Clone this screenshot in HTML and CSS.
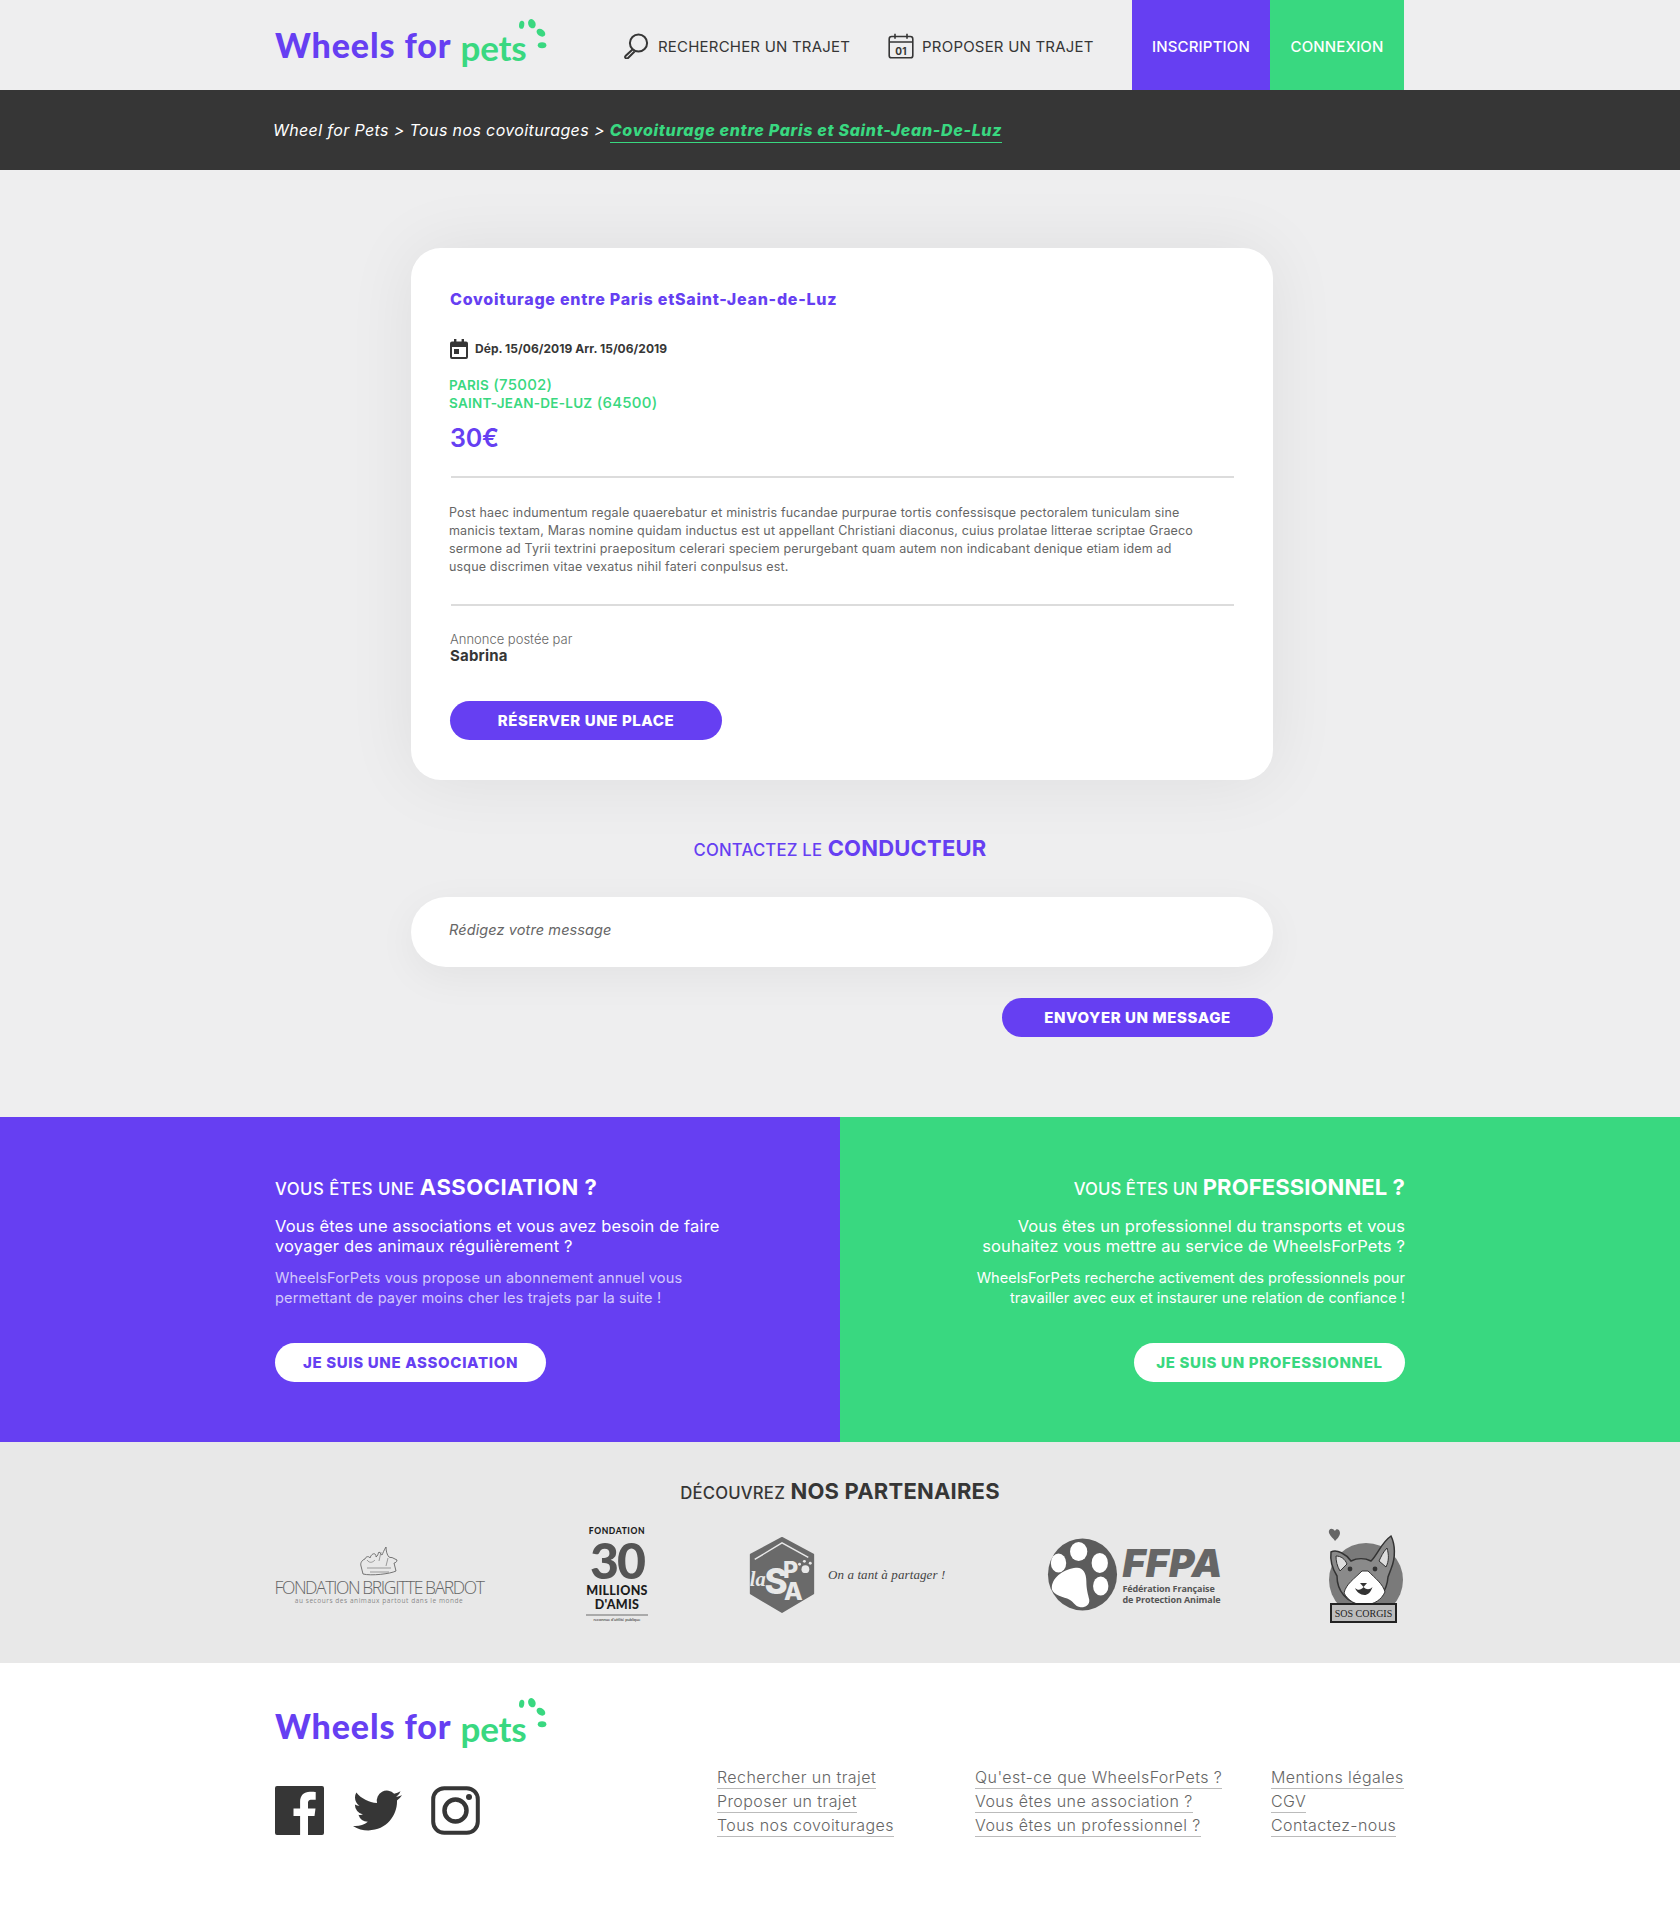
FILE: index.html
```html
<!DOCTYPE html>
<html lang="fr">
<head>
<meta charset="utf-8">
<title>Wheels for Pets</title>
<link rel="stylesheet" href="styles.css">
</head>
<body>
<header class="topbar">
  <div class="wrap topbar-in">
    <a class="logo">
      <span class="logo-a">Wheels for</span><span class="logo-b">pets</span>
      <svg class="paws" viewBox="0 0 30 30"><ellipse cx="5" cy="6" rx="2.3" ry="3.6" transform="rotate(8 5 6)"/><ellipse cx="14" cy="5" rx="3.2" ry="4.2" transform="rotate(-20 14 5)"/><ellipse cx="22" cy="13" rx="3" ry="4.2" transform="rotate(-55 22 13)"/><ellipse cx="23" cy="24" rx="3.8" ry="2.6"/></svg>
    </a>
    <nav class="nav">
      <a class="nav-link nav-search">
        <svg class="nav-ic" viewBox="0 0 26 26"><circle cx="15.5" cy="10" r="8.6" fill="none" stroke="#363636" stroke-width="2"/><path d="M9.5 16.5 2.5 23a1.6 1.6 0 0 0 2.3 2.2l6.8-6.7" fill="none" stroke="#363636" stroke-width="2"/></svg>
        RECHERCHER UN TRAJET
      </a>
      <a class="nav-link nav-post">
        <svg class="nav-ic" viewBox="0 0 26 26"><rect x="1.2" y="3.5" width="23.6" height="21.3" rx="2.4" fill="none" stroke="#363636" stroke-width="1.6"/><path d="M1.2 9h23.6M7 .8v5M19 .8v5" fill="none" stroke="#363636" stroke-width="1.6"/><text x="13" y="21.5" class="cal-num">01</text></svg>
        PROPOSER UN TRAJET
      </a>
    </nav>
    <a class="cta cta-purple">INSCRIPTION</a>
    <a class="cta cta-green">CONNEXION</a>
  </div>
</header>

<div class="crumbs">
  <div class="wrap crumbs-in">Wheel for Pets &gt; Tous nos covoiturages &gt; <strong class="crumb-on">Covoiturage entre Paris et Saint-Jean-De-Luz</strong></div>
</div>

<main class="main">
  <article class="card">
    <h1 class="card-title">Covoiturage entre Paris etSaint-Jean-de-Luz</h1>
    <p class="dates">
      <svg class="date-ic" viewBox="0 0 18 20"><path d="M2 2.5h2V0h2.4v2.5h5.2V0H14v2.5h2a2 2 0 0 1 2 2V18a2 2 0 0 1-2 2H2a2 2 0 0 1-2-2V4.500a2 2 0 0 1 2-2Zm0 5.500V18h14V8Z" fill="#363636"/><rect x="4" y="10" width="5" height="5" fill="#363636"/></svg>
      Dép. 15/06/2019 Arr. 15/06/2019
    </p>
    <p class="city"><span class="up">Paris</span> (75002)<br><span class="up">Saint-Jean-de-Luz</span> (64500)</p>
    <p class="price">30€</p>
    <hr class="rule">
    <p class="desc">Post haec indumentum regale quaerebatur et ministris fucandae purpurae tortis confessisque pectoralem tuniculam sine manicis textam, Maras nomine quidam inductus est ut appellant Christiani diaconus, cuius prolatae litterae scriptae Graeco sermone ad Tyrii textrini praepositum celerari speciem perurgebant quam autem non indicabant denique etiam idem ad usque discrimen vitae vexatus nihil fateri conpulsus est.</p>
    <hr class="rule rule-2">
    <p class="by">Annonce postée par</p>
    <p class="name">Sabrina</p>
    <a class="pill pill-reserve">RÉSERVER UNE PLACE</a>
  </article>

  <h2 class="contact-title"><span class="sm">Contactez le</span> <b>CONDUCTEUR</b></h2>
  <div class="msg">Rédigez votre message</div>
  <div class="send-row"><a class="pill pill-send">ENVOYER UN MESSAGE</a></div>
</main>

<section class="duo">
  <div class="half half-p">
    <div class="half-in">
      <h2 class="half-title"><span class="sm">Vous êtes une</span> <b>ASSOCIATION ?</b></h2>
      <p class="lead">Vous êtes une associations et vous avez besoin de faire voyager des animaux régulièrement ?</p>
      <p class="sub sub-dim">WheelsForPets vous propose un abonnement annuel vous permettant de payer moins cher les trajets par la suite !</p>
      <a class="pill-w pill-w-p">JE SUIS UNE ASSOCIATION</a>
    </div>
  </div>
  <div class="half half-g">
    <div class="half-in half-in-r">
      <h2 class="half-title"><span class="sm">Vous êtes un</span> <b>PROFESSIONNEL ?</b></h2>
      <p class="lead">Vous êtes un professionnel du transports et vous souhaitez vous mettre au service de WheelsForPets ?</p>
      <p class="sub">WheelsForPets recherche activement des professionnels pour travailler avec eux et instaurer une relation de confiance !</p>
      <a class="pill-w pill-w-g">JE SUIS UN PROFESSIONNEL</a>
    </div>
  </div>
</section>

<section class="partners">
  <h2 class="partners-title"><span class="sm">Découvrez</span> <b>NOS PARTENAIRES</b></h2>
  <div class="wrap logos">
    <div class="lg lg-bardot">
      <svg class="bb-ic" viewBox="0 0 42 34"><path d="M3 23c-1-3 1-6 4-7 1-3 4-3 5-1 1-3 3-5 5-4 1 1 1 2 1 3 2-1 2-4 3-5 2 1 2 3 3 3 1-2 2-5 4-8 0 4 1 8 3 10 1 1 3 0 4 1l4 2c0 2-2 3-3 3l2 8c-6 3-25 5-33 3l-2-8Z" fill="none" stroke="#666" stroke-width=".9"/><path d="M9 17c3 4 6 2 8 0M23 9l-2 9M30 15l-2 8M9 25h24M12 29h19" fill="none" stroke="#777" stroke-width=".7"/></svg>
      <div class="bb-name">FONDATION BRIGITTE BARDOT</div>
      <div class="bb-sub">au secours des animaux partout dans le monde</div>
    </div>
    <div class="lg lg-30">
      <div class="m30-top">FONDATION</div>
      <div class="m30-num">30</div>
      <div class="m30-mid">MILLIONS<br>D'AMIS</div>
      <div class="m30-foot">reconnue d'utilité publique</div>
    </div>
    <div class="lg lg-spa">
      <svg class="spa-ic" viewBox="0 0 68 78"><path d="M34 1 66 18V58L34 77 2 58V18Z" fill="#6a6a6a" stroke="#6a6a6a" stroke-width="2" stroke-linejoin="round"/><path d="M6 23 34 6l27 15" fill="none" stroke="#e8e8e8" stroke-width="1.500"/><text x="1" y="50" class="spa-la">la</text><text x="16" y="58" class="spa-s">S</text><text x="35" y="42" class="spa-p">P</text><text x="36" y="65" class="spa-a">A</text><circle cx="58" cy="33" r="4" fill="#e8e8e8"/><circle cx="52" cy="28" r="1.500" fill="#e8e8e8"/><circle cx="57" cy="25" r="1.500" fill="#e8e8e8"/><circle cx="63" cy="27" r="1.500" fill="#e8e8e8"/></svg>
      <span class="spa-tag">On a tant à partager !</span>
    </div>
    <div class="lg lg-ffpa">
      <svg class="ffpa-ic" viewBox="0 0 74 76"><ellipse cx="37" cy="38" rx="36" ry="37.500" fill="#5c5c5c"/><ellipse cx="33" cy="14" rx="9" ry="10" fill="#fff"/><ellipse cx="12" cy="26" rx="8" ry="10" fill="#fff"/><ellipse cx="55" cy="26" rx="8.500" ry="10.500" fill="#fff"/><ellipse cx="56" cy="50" rx="8" ry="10" fill="#fff"/><path d="M30 31c7-1 11 5 11 14 0 9 2 14 3 19 1 6-5 9-10 8-5-1-7-7-13-9C14 61 4 58 5 51 6 40 19 32 30 31Z" fill="#fff"/></svg>
      <div class="ffpa-t">
        <div class="ffpa-big">FFPA</div>
        <div class="ffpa-sm">Fédération Française<br>de Protection Animale</div>
      </div>
    </div>
    <div class="lg lg-corgi">
      <svg class="corgi" viewBox="0 0 80 100"><path d="M10 7c-3-4-7-2-6 2 1 3 5 6 6 8 2-2 5-5 5-8 0-4-4-5-5-2Z" fill="#666"/><circle cx="41" cy="56" r="37" fill="#7a7a7a"/><path d="M6 28c6-3 15 2 20 9 6-3 14-3 20 0 7-7 10-18 20-25 4 8 5 21 0 33l-3 8c-1 12-7 25-24 27C21 80 12 66 12 52 7 44 5 36 6 28Z" fill="#8a8a8a" stroke="#333" stroke-width="1.500"/><path d="M11 32c5 0 9 3 11 8l-7 7c-3-5-4-10-4-15ZM62 24c2 7 2 13-1 19l-7-6c2-4 4-9 8-13Z" fill="#ddd" stroke="#333"/><path d="M37 47c-8 8-16 13-18 22 4 8 12 12 21 12 10-1 16-5 20-13-2-8-10-14-17-21Z" fill="#fff" stroke="#333"/><circle cx="25" cy="45" r="2.400" fill="#333"/><circle cx="50" cy="45" r="2.400" fill="#333"/><path d="M35 59h7l-3.500 4ZM30 64c3 3 6 2 8.500-1 3 3 6 3 9 0-2 6-5 8-8 8-4 0-8-3-9.500-7Z" fill="#333"/><rect x="6" y="80" width="65" height="18" fill="#bdbdbd" stroke="#222" stroke-width="2"/><text x="38.500" y="93" class="corgi-t">SOS CORGIS</text></svg>
    </div>
  </div>
</section>

<footer class="footer">
  <div class="wrap footer-in">
    <div class="foot-left">
      <a class="logo logo-foot">
        <span class="logo-a">Wheels for</span><span class="logo-b">pets</span>
        <svg class="paws" viewBox="0 0 30 30"><ellipse cx="5" cy="6" rx="2.3" ry="3.6" transform="rotate(8 5 6)"/><ellipse cx="14" cy="5" rx="3.2" ry="4.2" transform="rotate(-20 14 5)"/><ellipse cx="22" cy="13" rx="3" ry="4.2" transform="rotate(-55 22 13)"/><ellipse cx="23" cy="24" rx="3.8" ry="2.6"/></svg>
      </a>
      <div class="social">
        <svg class="soc" viewBox="0 0 49 49"><path d="M2 0h45a2 2 0 0 1 2 2v45a2 2 0 0 1-2 2H33V30h6.500l1-7.500H33v-5c0-2.200.6-3.700 3.700-3.700h4V6.100c-.7-.1-3.100-.3-5.800-.3-5.800 0-9.800 3.500-9.800 10v6.700h-6.600V30h6.600v19H2a2 2 0 0 1-2-2V2a2 2 0 0 1 2-2Z" fill="#363636"/></svg>
        <svg class="soc" viewBox="0 0 24 24"><path d="M23.953 4.57a10 10 0 01-2.825.775 4.958 4.958 0 002.163-2.723c-.951.555-2.005.959-3.127 1.184a4.92 4.92 0 00-8.384 4.482C7.69 8.095 4.067 6.13 1.64 3.162a4.822 4.822 0 00-.666 2.475c0 1.71.87 3.213 2.188 4.096a4.904 4.904 0 01-2.228-.616v.06a4.923 4.923 0 003.946 4.827 4.996 4.996 0 01-2.212.085 4.936 4.936 0 004.604 3.417 9.867 9.867 0 01-6.102 2.105c-.39 0-.779-.023-1.17-.067a13.995 13.995 0 007.557 2.209c9.053 0 13.998-7.496 13.998-13.985 0-.21 0-.42-.015-.63A9.935 9.935 0 0024 4.59z" fill="#363636"/></svg>
        <svg class="soc" viewBox="0 0 49 49"><rect x="2.200" y="2.200" width="44.600" height="44.600" rx="11" fill="none" stroke="#363636" stroke-width="4"/><circle cx="24.500" cy="24.500" r="11" fill="none" stroke="#363636" stroke-width="4.500"/><circle cx="38" cy="11" r="3" fill="#363636"/></svg>
      </div>
    </div>
    <div class="foot-links">
      <ul class="col">
        <li><a>Rechercher un trajet</a></li>
        <li><a>Proposer un trajet</a></li>
        <li><a>Tous nos covoiturages</a></li>
      </ul>
      <ul class="col">
        <li><a>Qu'est-ce que WheelsForPets ?</a></li>
        <li><a>Vous êtes une association ?</a></li>
        <li><a>Vous êtes un professionnel ?</a></li>
      </ul>
      <ul class="col">
        <li><a>Mentions légales</a></li>
        <li><a>CGV</a></li>
        <li><a>Contactez-nous</a></li>
      </ul>
    </div>
  </div>
</footer>
</body>
</html>
```
FILE: styles.css
```css
* { box-sizing: border-box; }
html, body { margin: 0; padding: 0; }
body { font-family: Inter, "Open Sans", sans-serif; color: #363636; background: #eeeeef; width: 1680px; }
h1, h2, p, ul { margin: 0; padding: 0; }
ul { list-style: none; }
b, strong { font-weight: 700; }
.wrap { width: 1130px; margin: 0 auto; }
.sm { font-size: .76em; font-weight: 500; text-transform: uppercase; }

.topbar { height: 90px; background: #eeeeef; }
.topbar-in { display: flex; height: 90px; align-items: stretch; }
.logo { position: relative; display: flex; align-items: baseline; width: 272px; height: 60px; margin-top: 14px; padding-top: 12px; }
.logo-a { font: 900 34px/36px Lato, sans-serif; color: #663ff2; letter-spacing: .9px; white-space: nowrap; }
.logo-b { font: 700 35px/36px Lato, sans-serif; color: #39d880; margin-left: 9px; letter-spacing: -.2px; position: relative; top: 3px; }
.paws { position: absolute; left: 241px; top: 4px; width: 34px; height: 34px; fill: #39d880; }
.nav { display: flex; align-items: center; margin-left: 76px; gap: 38px; width: 509px; padding-top: 2px; }
.nav-link { display: flex; align-items: center; gap: 8px; font-size: 15px; color: #363636; white-space: nowrap; letter-spacing: .2px; }
.nav-search { gap: 9px; }
.nav-ic { width: 26px; height: 26px; flex: none; }
.cal-num { font: 700 10px Inter, sans-serif; text-anchor: middle; fill: #363636; }
.cta { display: flex; align-items: center; justify-content: center; color: #fff; font-size: 15px; font-weight: 500; padding-top: 2px; letter-spacing: .15px; }
.cta-purple { width: 138px; background: #663ff2; }
.cta-green { width: 134px; background: #39d880; }

.crumbs { height: 80px; background: #363636; }
.crumbs-in { padding: 29px 0 0; margin-left: 273px; width: 1130px; font-size: 16px; line-height: 22px; font-style: italic; color: #fff; white-space: nowrap; letter-spacing: .38px; }
.crumb-on { color: #39d880; border-bottom: 1px solid #39d880; padding-bottom: 2px; font-weight: 800; letter-spacing: .68px; }

.main { height: 947px; padding-top: 78px; background: #eeeeef; }
.card { width: 862px; height: 532px; margin-left: 411px; padding: 39px 39px 0; background: #fff; border-radius: 30px; box-shadow: 0 0 70px rgba(0,0,0,.07); }
.card-title { font-size: 16px; line-height: 24px; font-weight: 800; color: #663ff2; letter-spacing: .75px; }
.dates { display: flex; align-items: center; gap: 7px; margin-top: 28px; font-size: 12px; line-height: 20px; font-weight: 700; color: #363636; letter-spacing: .05px; }
.date-ic { width: 18px; height: 20px; flex: none; }
.city { margin-top: 17px; margin-left: -1px; font-size: 15px; line-height: 17px; font-weight: 500; color: #39d880; letter-spacing: .25px; }
.up { text-transform: uppercase; font-size: 13.500px; font-weight: 600; }
.price { margin-top: 9px; font-size: 25px; line-height: 34px; font-weight: 600; color: #663ff2; letter-spacing: -.2px; }
.rule { height: 2px; margin: 21px 0 0 1px; border: 0; background: #dcdcdc; width: 783px; }
.desc { width: 750px; margin-top: 26px; margin-left: -1px; font-size: 12.500px; line-height: 18px; color: #666; letter-spacing: .17px; }
.rule-2 { margin-top: 28px; }
.by { margin-top: 25px; font-size: 13px; line-height: 17px; color: #666; font-weight: 300; }
.name { font-size: 15px; line-height: 16px; font-weight: 700; color: #363636; letter-spacing: .2px; }
.pill { display: flex; align-items: center; justify-content: center; height: 39px; padding-bottom: 1px; background: #663ff2; color: #fff; font-size: 15px; font-weight: 800; letter-spacing: .6px; border-radius: 20px; }
.pill-reserve { width: 272px; margin-top: 37px; }
.contact-title { margin-top: 53px; text-align: center; font-size: 22px; line-height: 30px; font-weight: 700; color: #663ff2; letter-spacing: .2px; }
.msg { width: 862px; height: 70px; margin: 32px 0 0 411px; padding: 0 38px 5px; display: flex; align-items: center; background: #fff; border-radius: 35px; box-shadow: 0 10px 40px rgba(0,0,0,.05); font-size: 14.500px; font-style: italic; color: #666; letter-spacing: .1px; }
.send-row { display: flex; justify-content: flex-end; width: 1273px; margin-top: 31px; }
.pill-send { width: 271px; }

.duo { display: flex; height: 325px; }
.half { width: 840px; color: #fff; padding-top: 56px; }
.half-p { background: #663ff2; }
.half-g { background: #39d880; }
.half-in { width: 460px; margin-left: 275px; }
.half-in-r { margin-left: 105px; text-align: right; }
.half-title { font-size: 22px; line-height: 28px; font-weight: 800; letter-spacing: .5px; }
.half-in-r .half-title { letter-spacing: .1px; }
.lead { margin-top: 13px; font-size: 16.500px; line-height: 20px; letter-spacing: .17px; }
.half-in-r .lead { width: 440px; margin-left: 20px; letter-spacing: .12px; }
.sub { margin-top: 12px; font-size: 14.600px; line-height: 20px; }
.sub-dim { color: rgba(255,255,255,.72); letter-spacing: .12px; }
.pill-w { display: inline-flex; align-items: center; justify-content: center; width: 271px; height: 39px; margin-top: 35px; background: #fff; border-radius: 20px; font-size: 15px; font-weight: 800; letter-spacing: .65px; }
.pill-w-p { color: #663ff2; }
.pill-w-g { color: #39d880; }

.partners { height: 221px; background: #e8e8e8; padding-top: 35px; }
.partners-title { text-align: center; font-size: 22px; line-height: 28px; font-weight: 700; color: #363636; letter-spacing: .2px; }
.logos { display: flex; justify-content: space-between; align-items: center; height: 100px; margin-top: 17px; }
.lg { display: flex; flex-shrink: 0; color: #5c5c5c; }
.lg-bardot { flex-direction: column; align-items: center; width: 208px; }
.bb-ic { width: 42px; height: 34px; }
.bb-name { font: 300 17.500px/20px "Open Sans", sans-serif; color: #666; letter-spacing: -1.400px; white-space: nowrap; }
.bb-sub { font: 400 6.500px/8px "Open Sans", sans-serif; color: #888; letter-spacing: .55px; white-space: nowrap; }
.lg-30 { flex-direction: column; align-items: center; width: 58px; color: #1c1c1c; text-align: center; margin-left: 3px; }
.m30-top { font: 900 8.500px/12px Lato, sans-serif; letter-spacing: .6px; }
.m30-num { font: 900 50px/47px Lato, sans-serif; color: #555; letter-spacing: -2px; }
.m30-mid { font: 900 12.500px/14px Lato, sans-serif; letter-spacing: .3px; padding: 0 0 2px; border-bottom: 2px solid #aaa; }
.m30-foot { font: 400 4px/7px Lato, sans-serif; white-space: nowrap; }
.lg-spa { align-items: center; gap: 12px; margin-top: 2px; }
.spa-ic { width: 68px; height: 76px; }
.spa-la { font: italic 700 21px "Liberation Serif", serif; fill: #e8e8e8; }
.spa-s { font: 800 36px Inter, sans-serif; fill: #e8e8e8; }
.spa-p { font: 800 24px Inter, sans-serif; fill: #e8e8e8; }
.spa-a { font: 800 25px Inter, sans-serif; fill: #e8e8e8; }
.spa-tag { font: italic 400 13px "Liberation Serif", serif; color: #444; white-space: nowrap; letter-spacing: .1px; }
.lg-ffpa { align-items: center; gap: 4px; margin-top: 0; }
.ffpa-ic { width: 71px; height: 75px; }
.ffpa-big { font: italic 900 39px/40px Inter, sans-serif; color: #666; letter-spacing: .5px; }
.ffpa-sm { font: 700 9px/11px "Open Sans", sans-serif; color: #555; letter-spacing: -.1px; white-space: nowrap; }
.corgi { display: block; width: 80px; height: 100px; }
.corgi-t { font: 400 10px "Liberation Serif", serif; text-anchor: middle; fill: #222; }

.footer { height: 253px; background: #fff; }
.footer-in { display: flex; justify-content: space-between; }
.foot-left { width: 272px; }
.logo-foot { margin-top: 32px; }
.logo-foot .paws { top: 2px; }
.social { display: flex; gap: 29px; margin-top: 31px; }
.soc { width: 49px; height: 49px; }
.foot-links { display: grid; grid-template-columns: 258px 296px auto; margin-top: 103px; width: 688px; }
.col li { height: 24px; font-size: 16px; line-height: 22px; font-weight: 300; letter-spacing: .42px; }
.col a { color: #666; border-bottom: 1px solid #bbb; padding-bottom: 1px; white-space: nowrap; }
```
